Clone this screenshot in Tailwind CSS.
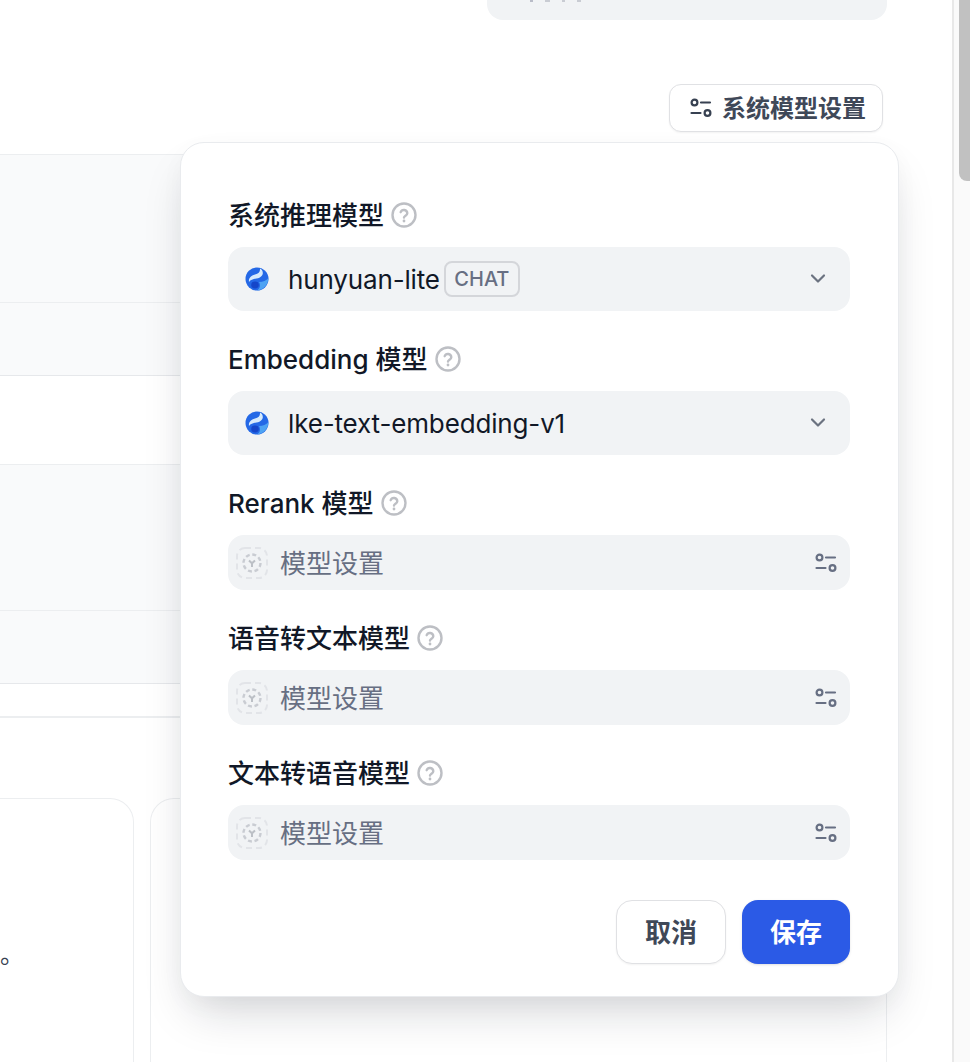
<!doctype html>
<html lang="zh">
<head>
<meta charset="utf-8">
<script src="https://cdn.jsdelivr.net/npm/@tailwindcss/browser@4"></script>
</head>
<body class="m-0 bg-white">
<svg width="0" height="0" class="absolute">
  <defs>
    <symbol id="sliders" viewBox="0 0 22 22">
      <circle cx="4.5" cy="5.5" r="2.9" fill="none" stroke="currentColor" stroke-width="2.2"/>
      <path d="M11 5.500h9M1.500 16h9" fill="none" stroke="currentColor" stroke-width="2.2" stroke-linecap="round"/>
      <circle cx="17.5" cy="16" r="2.9" fill="none" stroke="currentColor" stroke-width="2.2"/>
    </symbol>
    <symbol id="help" viewBox="0 0 26 26">
      <circle cx="13" cy="13" r="11.5" fill="none" stroke="#bdbfc4" stroke-width="2.4"/>
      <path d="M9.700 10.200a3.400 3.400 0 0 1 6.600 1c0 2.300-3.300 2.600-3.300 4.400" fill="none" stroke="#bdbfc4" stroke-width="2.4" stroke-linecap="round"/>
      <circle cx="13" cy="19" r="1.4" fill="#bdbfc4"/>
    </symbol>
    <symbol id="chevron" viewBox="0 0 16 16">
      <path d="M2 4.500l6 6 6-6" fill="none" stroke="#6b7280" stroke-width="2.2" stroke-linecap="round" stroke-linejoin="round"/>
    </symbol>
    <symbol id="logo" viewBox="0 0 26 26">
      <circle cx="13" cy="13" r="11.500" fill="#2468e6"/>
      <path d="M24.400 12c.1 6.300-4.800 12-11.400 12.500 3-2.200 4-5.200 2-8.500 4 0 7.300-1.500 9.400-4z" fill="#4ea3f3"/>
      <path d="M16 2.500c4 2 4.500 8.500-3.500 10-3.200.6-6 1.300-7.500 3.500-.6-3.200 1.500-6.500 6-7.500 3.500-.8 5.300-2.500 5-6z" fill="#d6eafc"/>
      <ellipse cx="11" cy="19" rx="3.800" ry="3.400" fill="#1546c9"/>
    </symbol>
    <symbol id="empty" viewBox="0 0 32 32">
      <rect x="1" y="1" width="30" height="30" rx="8" fill="none" stroke="#e2e4e8" stroke-width="2" stroke-dasharray="6 4"/>
      <circle cx="16" cy="16" r="8.500" fill="none" stroke="#c9ccd2" stroke-width="2.400" stroke-dasharray="4 2.680"/>
      <path d="M13 13.500l3 2.800 3-2.800M16 16.300v3.700" fill="none" stroke="#bcc0c6" stroke-width="2"/>
    </symbol>
  </defs>
</svg>

<div class="relative flex h-[1062px] w-[970px] overflow-hidden font-['Inter','Noto_Sans_CJK_SC',sans-serif]">
  <main class="flex w-[952px] flex-col">
    <div class="ml-[487px] flex h-5 w-[400px] items-start gap-[12px] rounded-b-2xl bg-[#f1f3f5] pl-[43px]">
      <span class="h-[2px] w-[3px] bg-[#b9bcc8]"></span>
      <span class="h-[2px] w-[5px] bg-[#c9ccd3]"></span>
      <span class="h-[2px] w-[3px] bg-[#c9ccd3]"></span>
      <span class="h-[2px] w-[4px] bg-[#c9ccd3]"></span>
    </div>

    <button class="mt-16 ml-[669px] flex h-12 w-[214px] items-center gap-[10px] rounded-xl border border-[#e0e1e4] bg-white pl-[20px] text-2xl font-semibold text-[#3f4858] shadow-xs">
      <svg class="size-[22px] text-[#374151]"><use href="#sliders"/></svg>
      <span class="pt-px">系统模型设置</span>
    </button>

    <section class="mt-[22px] mr-[65px] flex flex-col">
      <div class="h-[149px] border-y border-[#eceef0] bg-[#f9fafb]"></div>
      <div class="h-[73px] border-b border-[#e6e8eb] bg-[#f9fafb]"></div>
      <div class="h-[89px] border-b border-[#eceef0] bg-white"></div>
      <div class="h-[146px] border-b border-[#eceef0] bg-[#f9fafb]"></div>
      <div class="h-[73px] border-b border-[#e6e8eb] bg-[#f9fafb]"></div>
      <div class="h-[34px] border-b-2 border-[#eceef0] bg-white"></div>
    </section>

    <section class="mt-[80px] -ml-10 flex min-h-0 flex-1 gap-4 pr-[65px]">
      <div class="flex h-[400px] w-[174px] flex-col rounded-t-3xl border-x border-t border-[#eceef0] pt-[136px] pl-[39px]">
        <p class="text-[24px] leading-10 text-[#374151]">。</p>
      </div>
      <div class="h-[400px] flex-1 rounded-t-3xl border-x border-t border-[#eceef0]"></div>
    </section>
  </main>

  <aside class="w-[18px] border-l-2 border-[#e8e8e8] bg-[#fafafa] pl-[5px]">
    <div class="h-[181px] rounded-bl-lg bg-[#c1c1c1]"></div>
  </aside>

  <div class="absolute top-[142px] left-[180px] h-[855px] w-[719px] rounded-3xl border border-[#e9ebee] bg-white pt-[52px] pr-[48px] pl-[47px] shadow-[0_24px_48px_-12px_rgba(16,24,40,0.18),0_8px_24px_rgba(16,24,40,0.03)]">
    <div class="flex h-10 items-center gap-[7px] text-[26px] font-medium text-[#111827]"><span>系统推理模型</span><svg class="size-[26px]"><use href="#help"/></svg></div>
    <div class="mt-3 flex h-16 items-center rounded-2xl bg-[#f1f3f5] pr-6 pl-4">
      <svg class="size-[26px]"><use href="#logo"/></svg>
      <span class="ml-[18px] text-[26px] tracking-[-0.15px] text-[#111827]">hunyuan-lite</span>
      <span class="ml-1 rounded-lg border-2 border-[#d4d6da] px-[8.5px] text-xl leading-8 font-medium text-[#676f83]">CHAT</span>
      <svg class="ml-auto size-4"><use href="#chevron"/></svg>
    </div>

    <div class="mt-7 flex h-10 items-center gap-[7px] text-[26px] font-medium text-[#111827]"><span>Embedding 模型</span><svg class="size-[26px]"><use href="#help"/></svg></div>
    <div class="mt-3 flex h-16 items-center rounded-2xl bg-[#f1f3f5] pr-6 pl-4">
      <svg class="size-[26px]"><use href="#logo"/></svg>
      <span class="ml-[18px] text-[26px] tracking-[-0.15px] text-[#111827]">lke-text-embedding-v1</span>
      <svg class="ml-auto size-4"><use href="#chevron"/></svg>
    </div>

    <div class="mt-7 flex h-10 items-center gap-[7px] text-[26px] font-medium text-[#111827]"><span>Rerank 模型</span><svg class="size-[26px]"><use href="#help"/></svg></div>
    <div class="mt-3 flex h-[55px] items-center rounded-2xl bg-[#f1f3f5] pr-[13px] pl-2">
      <svg class="size-8"><use href="#empty"/></svg>
      <span class="ml-3 pt-px text-[26px] text-[#676f83]">模型设置</span>
      <svg class="ml-auto size-[22px] text-[#676f83]"><use href="#sliders"/></svg>
    </div>

    <div class="mt-7 flex h-10 items-center gap-[7px] text-[26px] font-medium text-[#111827]"><span>语音转文本模型</span><svg class="size-[26px]"><use href="#help"/></svg></div>
    <div class="mt-3 flex h-[55px] items-center rounded-2xl bg-[#f1f3f5] pr-[13px] pl-2">
      <svg class="size-8"><use href="#empty"/></svg>
      <span class="ml-3 pt-px text-[26px] text-[#676f83]">模型设置</span>
      <svg class="ml-auto size-[22px] text-[#676f83]"><use href="#sliders"/></svg>
    </div>

    <div class="mt-7 flex h-10 items-center gap-[7px] text-[26px] font-medium text-[#111827]"><span>文本转语音模型</span><svg class="size-[26px]"><use href="#help"/></svg></div>
    <div class="mt-3 flex h-[55px] items-center rounded-2xl bg-[#f1f3f5] pr-[13px] pl-2">
      <svg class="size-8"><use href="#empty"/></svg>
      <span class="ml-3 pt-px text-[26px] text-[#676f83]">模型设置</span>
      <svg class="ml-auto size-[22px] text-[#676f83]"><use href="#sliders"/></svg>
    </div>

    <div class="mt-10 flex justify-end gap-4">
      <button class="h-16 w-[110px] rounded-2xl border border-[#e0e1e4] bg-white text-[26px] font-semibold text-[#3f4858] shadow-xs">取消</button>
      <button class="h-16 w-[108px] rounded-2xl bg-[#2b5ae6] text-[26px] font-semibold text-white shadow-sm">保存</button>
    </div>
  </div>
</div>
</body>
</html>
